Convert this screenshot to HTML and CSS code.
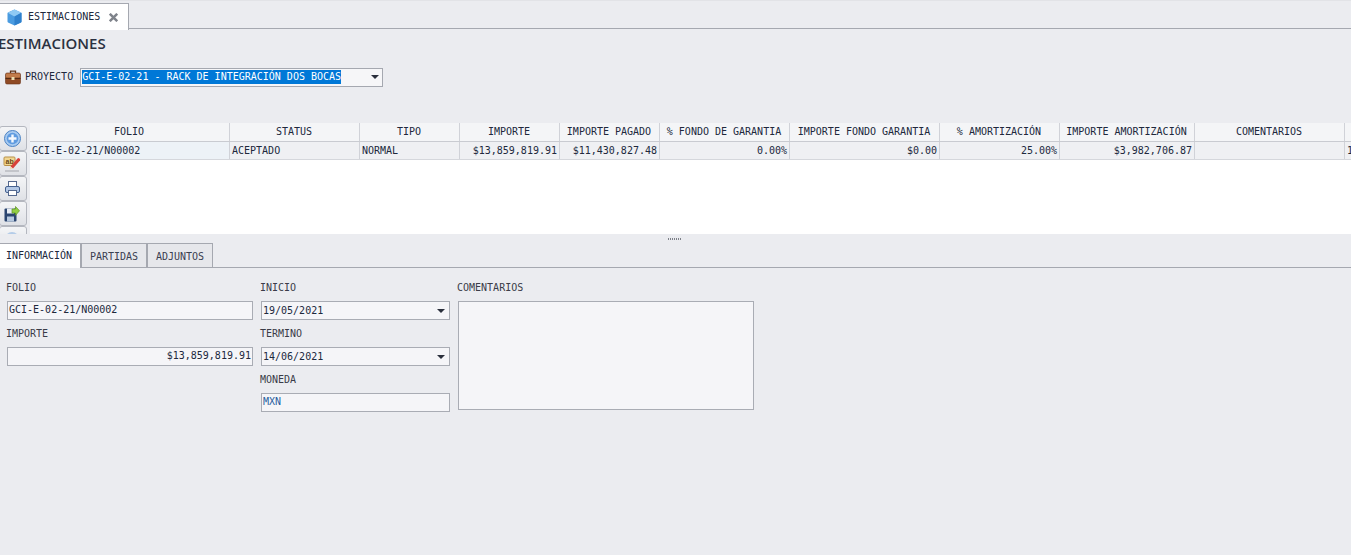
FILE: index.html
```html
<!DOCTYPE html>
<html lang="es">
<head>
<meta charset="utf-8">
<title>Estimaciones</title>
<link rel="stylesheet" href="styles.css">
</head>
<body>
<div class="tabstrip">
  <div class="doc-tab">
    <svg class="cube" width="15" height="17" viewBox="0 0 15 17"><path d="M7.500 0.500 14 3.500Q14.500 3.800 14.500 4.500v8Q14.500 13.200 14 13.500L7.500 16.500 1 13.500Q0.500 13.200 0.500 12.500v-8Q0.500 3.800 1 3.500z" fill="#4a9be0"/><path d="M7.500 0.500 14.300 3.700 7.500 7.500 0.700 3.700z" fill="#8fcaf4"/><path d="M7.500 7.500V16.500L14 13.500Q14.500 13.200 14.500 12.500v-8Q14.500 4 14.300 3.700z" fill="#2f80cc"/></svg>
    <span class="doc-tab-label">ESTIMACIONES</span>
    <svg class="close" width="9" height="9" viewBox="0 0 9 9"><path d="M0.800 0.800l7.400 7.400M8.200 0.800L0.800 8.200" stroke="#7f838b" stroke-width="2.500"/></svg>
  </div>
</div>
<h1 class="title">ESTIMACIONES</h1>
<div class="project">
  <svg class="case" width="16" height="15" viewBox="0 0 16 15"><path d="M5.500 3V1.200h5V3" fill="none" stroke="#5e3318" stroke-width="1.300"/><rect x="0.500" y="3" width="15" height="11" rx="1.500" fill="#8f4a24" stroke="#6a3418" stroke-width="0.600"/><rect x="1" y="3.400" width="14" height="4" rx="1" fill="#c27c4a"/><rect x="0.500" y="8" width="15" height="1" fill="#552a10"/><rect x="6.500" y="7" width="3" height="3" fill="#ecdcae"/></svg>
  <span class="project-label">PROYECTO</span>
  <div class="select">
    <span class="selected">GCI-E-02-21 - RACK DE INTEGRACIÓN DOS BOCAS</span>
    <span class="caret"></span>
  </div>
</div>
<div class="browse">
  <div class="toolbar">
    <div class="tool">
      <svg width="17" height="17" viewBox="0 0 17 17"><circle cx="8.500" cy="8.500" r="8" fill="#a9cbf0" stroke="#4a82c4"/><circle cx="8.500" cy="8.500" r="5.800" fill="#5f9be0"/><path d="M8.500 4.500v8M4.500 8.500h8" stroke="#f4f8fd" stroke-width="2.400"/></svg>
    </div>
    <div class="tool">
      <svg width="18" height="16" viewBox="0 0 18 16"><rect x="1" y="1" width="11" height="8.500" rx="1" fill="#f1d692" stroke="#b9924a"/><text class="ab" x="2.500" y="7.500">ab</text><path d="M7.500 10.500 14.500 2.500q1-.8 2 0t.5 2L10 12.500z" fill="#d8413a"/><path d="M7.500 10.500l2.500 2-3.500 1z" fill="#f2d6b3"/><rect x="2" y="14.500" width="14" height="1" fill="#a4a6ac"/></svg>
    </div>
    <div class="tool">
      <svg width="15" height="15" viewBox="0 0 15 15"><rect x="3.500" y="0.500" width="8" height="6" fill="#fff" stroke="#55688e"/><rect x="0.500" y="5.500" width="14" height="6" rx="1.500" fill="#b3c8e6" stroke="#46618f"/><rect x="3.500" y="9.500" width="8" height="5" fill="#fff" stroke="#55688e"/></svg>
    </div>
    <div class="tool">
      <svg width="16" height="16" viewBox="0 0 16 16"><rect x="0.500" y="2.500" width="12" height="13" rx="1" fill="#2b4570"/><rect x="3" y="2.500" width="7" height="5" fill="#e8edf4"/><rect x="3" y="10.500" width="7" height="5" fill="#b6c8de"/><path d="M8 3h3.500V0.500L15.500 4.800l-4 4.500V7H8z" fill="#93cf44" stroke="#5c9420" stroke-width="0.700"/></svg>
    </div>
    <div class="tool">
      <svg width="16" height="16" viewBox="0 0 16 16"><circle cx="8" cy="8" r="7" fill="#b4cce8"/></svg>
    </div>
  </div>
  <div class="table">
    <div class="row head">
      <div class="cell">FOLIO</div>
      <div class="cell">STATUS</div>
      <div class="cell">TIPO</div>
      <div class="cell">IMPORTE</div>
      <div class="cell">IMPORTE PAGADO</div>
      <div class="cell">% FONDO DE GARANTIA</div>
      <div class="cell">IMPORTE FONDO GARANTIA</div>
      <div class="cell">% AMORTIZACIÓN</div>
      <div class="cell">IMPORTE AMORTIZACIÓN</div>
      <div class="cell">COMENTARIOS</div>
      <div class="cell"></div>
    </div>
    <div class="row data">
      <div class="cell first">GCI-E-02-21/N00002</div>
      <div class="cell">ACEPTADO</div>
      <div class="cell">NORMAL</div>
      <div class="cell num">$13,859,819.91</div>
      <div class="cell num">$11,430,827.48</div>
      <div class="cell num">0.00%</div>
      <div class="cell num">$0.00</div>
      <div class="cell num">25.00%</div>
      <div class="cell num">$3,982,706.87</div>
      <div class="cell"></div>
      <div class="cell">1</div>
    </div>
  </div>
</div>
<div class="splitter"><span class="grip"></span></div>
<div class="tabs">
  <div class="tab active">INFORMACIÓN</div>
  <div class="tab">PARTIDAS</div>
  <div class="tab">ADJUNTOS</div>
</div>
<div class="form">
  <div class="col col-a">
    <label class="lbl">FOLIO</label>
    <div class="field">GCI-E-02-21/N00002</div>
    <label class="lbl">IMPORTE</label>
    <div class="field right">$13,859,819.91</div>
  </div>
  <div class="col col-b">
    <label class="lbl">INICIO</label>
    <div class="field drop">19/05/2021<span class="caret"></span></div>
    <label class="lbl">TERMINO</label>
    <div class="field drop">14/06/2021<span class="caret"></span></div>
    <label class="lbl">MONEDA</label>
    <div class="field blue">MXN</div>
  </div>
  <div class="col col-c">
    <label class="lbl">COMENTARIOS</label>
    <div class="memo"></div>
  </div>
</div>
</body>
</html>
```
FILE: styles.css
```css
* { box-sizing: border-box; }
html, body { margin: 0; height: 100%; }
body {
  background: #ebecf0;
  color: #20283c;
  font: 10px/12px "DejaVu Sans Mono", "Liberation Mono", monospace;
  overflow: hidden;
}
.tabstrip {
  height: 29px;
  padding-top: 2px;
  border-top: 1px solid #e2e3e7;
  border-bottom: 1px solid #a5a8b0;
  display: flex;
}
.doc-tab {
  width: 129px;
  height: 27px;
  padding-left: 7px;
  background: #fff;
  border: 1px solid #a5a8b0;
  border-left: 0;
  border-bottom: 0;
  display: flex;
  align-items: center;
}
.doc-tab-label { margin-left: 6px; }
.close { margin-left: 9px; }
.title {
  margin: 0 0 0 -2px;
  height: 29px;
  font: 600 15px/28px "Open Sans", "Noto Sans", sans-serif;
  color: #2b3140;
}
.project {
  height: 20px;
  margin-top: 9px;
  padding-left: 5px;
  display: flex;
  align-items: center;
}
.project-label { margin-left: 4px; }
.select {
  width: 303px;
  height: 19px;
  margin-left: 7px;
  padding-left: 1px;
  background: #f6f6f8;
  border: 1px solid #a5a8b0;
  display: flex;
  align-items: center;
  justify-content: space-between;
}
.selected {
  height: 14px;
  line-height: 14px;
  background: #0078d7;
  color: #fff;
}
.caret {
  width: 0;
  height: 0;
  margin-right: 3px;
  border-left: 4px solid transparent;
  border-right: 4px solid transparent;
  border-top: 4px solid #2a2f3c;
}
.browse {
  height: 111px;
  margin-top: 36px;
  display: flex;
  overflow: hidden;
}
.toolbar {
  width: 30px;
  padding-top: 3px;
  flex: none;
}
.tool {
  width: 28px;
  height: 25px;
  margin-left: -1px;
  padding-right: 2px;
  background: linear-gradient(#f4f5f7, #dfe1e6);
  border: 1px solid #b4b7bf;
  border-radius: 3px;
  display: flex;
  align-items: center;
  justify-content: center;
}
.ab { font: 700 7px "Liberation Sans", sans-serif; fill: #6a4a14; }
.table {
  flex: 1;
  min-width: 0;
  background: #fff;
  overflow: hidden;
}
.row {
  display: grid;
  grid-template-columns: 200px 130px 100px 100px 100px 130px 150px 120px 135px 150px 1fr;
}
.head { height: 19px; background: #f4f5f7; border-bottom: 1px solid #c9cbd1; }
.head .cell { padding-right: 1px; text-align: center; line-height: 17px; }
.data { height: 18px; background: #eff0f3; border-bottom: 1px solid #d5d7dc; }
.data .cell { padding: 0 2px; line-height: 17px; }
.cell { border-right: 1px solid #d0d2d8; white-space: nowrap; overflow: hidden; }
.row .cell:last-child { border-right: 0; }
.first { background: #edf2f7; }
.num { text-align: right; }
.splitter {
  height: 9px;
  padding: 1px 2px 0 0;
  display: flex;
  align-items: center;
  justify-content: center;
}
.grip {
  width: 13px;
  height: 2px;
  background: repeating-linear-gradient(90deg, #7d8088 0 1px, transparent 1px 2px);
}
.tabs {
  height: 25px;
  display: flex;
  border-bottom: 1px solid #a5a8b0;
}
.tab {
  width: 66px;
  height: 24px;
  padding-top: 1px;
  background: #e6e7eb;
  border: 1px solid #a5a8b0;
  border-bottom: 0;
  text-align: center;
  line-height: 24px;
  color: #3a4050;
}
.tab.active {
  width: 81px;
  height: 25px;
  padding: 0 2px 0 0;
  line-height: 23px;
  background: #fff;
  border-left: 0;
  color: #20283c;
}
.tab + .tab + .tab { margin-left: 0; }
.form {
  display: flex;
  padding: 13px 0 0 6px;
}
.col { display: flex; flex-direction: column; }
.col-a { width: 254px; }
.col-b { width: 197px; }
.col-c { width: 297px; }
.lbl { height: 20px; line-height: 14px; color: #3a3c48; }
.field {
  height: 19px;
  width: 246px;
  margin: 0 0 7px 1px;
  padding: 0 1px;
  background: #f5f5f8;
  border: 1px solid #a9acb4;
  line-height: 16px;
  white-space: nowrap;
}
.col-b .field { width: 189px; }
.right { text-align: right; }
.drop { display: flex; align-items: center; justify-content: space-between; }
.blue { color: #2a5f9e; }
.memo {
  width: 296px;
  height: 109px;
  margin-left: 1px;
  background: #f5f5f8;
  border: 1px solid #a9acb4;
}
```
